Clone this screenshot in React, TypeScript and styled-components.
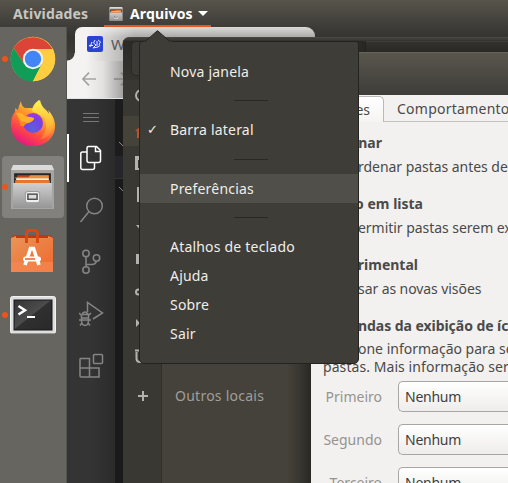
import React from 'react';
import styled, { createGlobalStyle } from 'styled-components';

const GlobalStyle = createGlobalStyle`
  * { box-sizing: border-box; }
  html, body { margin: 0; padding: 0; overflow: hidden; }
  body { font-family: 'Noto Sans', 'Open Sans', sans-serif; font-size: 14px; background: #33322e; }
  svg { display: block; flex: none; }
`;

const Desktop = styled.div`
  position: relative;
  width: 508px;
  height: 483px;
  overflow: hidden;
  display: flex;
  flex-direction: column;
`;

/* ---------- top bar ---------- */
const TopBar = styled.header`
  height: 27px;
  flex: none;
  display: flex;
  background: linear-gradient(#57544b, #3d3c38);
`;
const TopItem = styled.div<{ $active?: boolean; $width: number; $pad: number; $track: number }>`
  width: ${p => p.$width}px;
  padding-left: ${p => p.$pad}px;
  display: flex;
  align-items: center;
  font-weight: 700;
  font-size: 14px;
  letter-spacing: ${p => p.$track}px;
  white-space: nowrap;
  color: ${p => (p.$active ? '#ffffff' : '#c8c6c0')};
  border-bottom: 2px solid ${p => (p.$active ? '#e95420' : 'transparent')};
  padding-top: 2px;
`;
const AppName = styled.span`
  width: 63px;
  margin: 0 5px 0 7px;
`;

const Workspace = styled.div`
  flex: 1;
  display: flex;
  min-height: 0;
`;

/* ---------- dock ---------- */
const Dock = styled.nav`
  width: 67px;
  flex: none;
  display: flex;
  flex-direction: column;
  gap: 2px;
  padding: 1px 0 0 2px;
  background: #666560;
  border-right: 1px solid #54534e;
`;
const DockItem = styled.div<{ $focused?: boolean }>`
  width: 62px;
  height: 62px;
  border-radius: 4px;
  display: flex;
  align-items: center;
  background: ${p => (p.$focused ? '#82817d' : 'transparent')};
`;
const RunDot = styled.i<{ $on?: boolean }>`
  width: 6px;
  height: 6px;
  margin-right: 2px;
  border-radius: 50%;
  background: ${p => (p.$on ? '#e95420' : 'transparent')};
`;

/* ---------- browser ---------- */
const Browser = styled.section`
  flex: 1;
  display: flex;
  flex-direction: column;
  background: #33322e;
`;
const TabStrip = styled.div`
  height: 34px;
  padding-left: 8px;
  display: flex;
  background: linear-gradient(#3d3c38, #35342f 30%, #403f3b);
`;
const BrowserTab = styled.div`
  width: 240px;
  height: 34px;
  padding: 9px 0 0 12px;
  display: flex;
  align-items: flex-start;
  gap: 8px;
  border-radius: 7px 9px 0 0;
  color: #55555a;
  font-size: 15px;
  line-height: 16px;
  background:
    linear-gradient(90deg, #f4f3f2 12px, rgba(244, 243, 242, 0) 60px),
    linear-gradient(#dadad9, #a6a5a4 11px);
`;
const TabFoot = styled.div`
  width: 8px;
  height: 8px;
  margin: 26px 0 0 -8px;
  background: radial-gradient(circle at 0 0, #403f3b 7px, #f4f3f2 8px);
`;
const Toolbar = styled.div`
  height: 38px;
  padding: 11px 0 0 15px;
  display: flex;
  gap: 18px;
  border-bottom: 1px solid #dfe5e5;
  background: linear-gradient(90deg, #f4f3f2 18px, #e2e1e0 36px, #a3a2a1 56px);
`;
const Editor = styled.div`
  flex: 1;
  display: flex;
`;
const ActivityBar = styled.div`
  width: 48px;
  display: flex;
  flex-direction: column;
  gap: 4px;
  background: linear-gradient(90deg, #343434 24px, #2b2b2b);
`;
const MenuButton = styled.div`
  height: 31px;
  padding: 14px 0 0 16px;
`;
const Activity = styled.div<{ $active?: boolean }>`
  height: 48px;
  display: flex;
  align-items: center;
  padding-left: ${p => (p.$active ? 10 : 12)}px;
  border-left: ${p => (p.$active ? '2px solid #fff' : '0')};
`;
const EditorSide = styled.div`
  width: 8px;
  padding-top: 42px;
  background: linear-gradient(#1c1c1c 57px, #25252a 57px, #25252a 79px, #333 79px, #333 80px, #1a1a1a 80px);
`;

/* ---------- file manager window ---------- */
const FilesWindow = styled.section`
  position: absolute;
  left: 123px;
  top: 37px;
  width: 385px;
  height: 446px;
  display: flex;
  flex-direction: column;
  border-top-left-radius: 6px;
  overflow: hidden;
  background: #393833;
  border-top: 1px solid #4a4943;
`;
const FilesHeader = styled.div`
  height: 42px;
  display: flex;
  padding: 3px 0 4px 8px;
  background: linear-gradient(#3d3c37 2px, #2b2a27 3px, #35342f);
`;
const HeaderGroup = styled.div`
  width: 234px;
  border: 1px solid #292824;
  border-radius: 5px 0 0 5px;
  background: linear-gradient(90deg, #3b3a35 200px, #282723);
`;
const PathBar = styled.div`
  flex: 1;
  border-top: 1px solid #3f3e39;
  border-left: 1px solid #22211e;
  background: linear-gradient(#32312d, #2a2926 10px);
`;
const FilesBody = styled.div`
  flex: 1;
  display: flex;
`;
const Places = styled.div`
  width: 39px;
  display: flex;
  flex-direction: column;
  gap: 2px;
  border-right: 1px solid #302f2b;
`;
const Place = styled.div<{ $selected?: boolean; $last?: boolean }>`
  height: 30px;
  padding-left: 12px;
  margin-top: ${p => (p.$last ? 9 : 0)}px;
  display: flex;
  align-items: center;
  color: ${p => (p.$selected ? '#b4552f' : '#b4b2ae')};
  background: ${p => (p.$selected ? '#45423a' : 'transparent')};
`;
const SearchPlace = styled(Place)`
  height: 34px;
`;
const PlacesPane = styled.div`
  width: 149px;
  padding: 306px 0 0 13px;
  color: #a19e98;
  letter-spacing: 0.25px;
  line-height: 20px;
  background: linear-gradient(90deg, #45423b 125px, #393731 137px, #292823);
`;

/* ---------- preferences dialog ---------- */
const Dialog = styled.section`
  position: absolute;
  left: 311px;
  top: 52px;
  width: 197px;
  height: 431px;
  display: flex;
  flex-direction: column;
  overflow: hidden;
  color: #4a4a49;
  background: #f2f1f0;
`;
const DialogHeader = styled.div`
  height: 43px;
  flex: none;
  border-top: 1px solid #696458;
  background: linear-gradient(#59564d, #3e3d39);
`;
const Tabs = styled.div`
  height: 27px;
  flex: none;
  display: flex;
  border-bottom: 1px solid #c5c2bf;
`;
const DialogTab = styled.div<{ $active?: boolean }>`
  height: ${p => (p.$active ? 26 : 25)}px;
  margin-top: 1px;
  width: ${p => (p.$active ? 73 : 124)}px;
  padding-right: ${p => (p.$active ? 13 : 0)}px;
  padding-left: ${p => (p.$active ? 0 : 13)}px;
  display: flex;
  justify-content: ${p => (p.$active ? 'flex-end' : 'flex-start')};
  align-items: center;
  white-space: nowrap;
  border: solid #bbb8b5;
  border-width: ${p => (p.$active ? '1px 1px 0 0' : '0')};
  border-radius: 0 5px 0 0;
  letter-spacing: ${p => (p.$active ? 0 : 0.25)}px;
  background: ${p => (p.$active ? 'linear-gradient(#fff, #f5f4f3)' : 'transparent')};
`;
const Line = styled.div<{ $bold?: boolean; $gap?: number; $track?: number }>`
  height: 18px;
  flex: none;
  margin-top: ${p => p.$gap ?? 0}px;
  display: flex;
  line-height: 18px;
  white-space: nowrap;
  letter-spacing: ${p => p.$track ?? 0}px;
  font-weight: ${p => (p.$bold ? 700 : 400)};
`;
const Lead = styled.span<{ $to: number }>`
  width: ${p => p.$to}px;
  flex: none;
  display: flex;
  justify-content: flex-end;
  white-space: pre;
`;
const Form = styled.div`
  margin-top: 5px;
  display: flex;
  flex-direction: column;
  gap: 12px;
`;
const FormRow = styled.div`
  height: 31px;
  flex: none;
  display: flex;
  align-items: center;
`;
const FormLabel = styled.label`
  width: 71px;
  margin-right: 16px;
  text-align: right;
  color: #96938f;
`;
const Select = styled.div`
  flex: 1;
  height: 31px;
  padding: 0 0 1px 6px;
  display: flex;
  align-items: center;
  letter-spacing: -0.25px;
  border: solid #a9a6a2;
  border-width: 1px 0 1px 1px;
  border-radius: 5px 0 0 5px;
  color: #3f3f3e;
  background: linear-gradient(#fff, #eeedeb);
`;

/* ---------- application menu ---------- */
const Popover = styled.div`
  position: absolute;
  left: 139px;
  top: 30px;
  width: 220px;
`;
const PopArrow = styled.svg`
  margin-left: 5px;
  margin-bottom: -1px;
  position: relative;
  z-index: 1;
`;
const Menu = styled.div`
  height: 323px;
  padding-top: 15px;
  border: 1px solid #24231f;
  border-radius: 3px 3px 5px 5px;
  background: #3e3d38;
`;
const MenuItem = styled.div<{ $hover?: boolean }>`
  height: 29px;
  padding-left: 7px;
  display: flex;
  align-items: center;
  color: #f0eee9;
  letter-spacing: 0.2px;
  background: ${p => (p.$hover ? '#504f4a' : 'transparent')};
`;
const Check = styled.span`
  width: 23px;
  font-family: 'DejaVu Sans', sans-serif;
  font-size: 13px;
`;
const Separator = styled.div<{ $h: number }>`
  height: ${p => p.$h}px;
  display: flex;
  align-items: center;
  justify-content: center;
  padding-left: 4px;
  &::after { content: ''; width: 34px; height: 1px; background: #292824; }
`;

const Chrome = () => (
  <svg width="46" height="46" viewBox="-23 -23 46 46">
    <circle r="22.3" fill="#ffcd40" />
    <path d="M-19.3-11.2A22.3 22.3 0 0 1 19.3-10L0-10-8.7 5Z" fill="#db4437" />
    <path d="M-19.3-11.2A22.3 22.3 0 0 0 0 22.3L9 5-8.7 5Z" fill="#0f9d58" />
    <path d="M19.6-10A22.3 22.3 0 0 1 0 22.3L8.7 5 10-3 4-10Z" fill="#ffcd40" />
    <circle r="10.2" fill="#f1f1f1" /><circle r="8.2" fill="#4285f4" />
  </svg>
);

const Firefox = () => (
  <svg width="46" height="48" viewBox="0 0 46 48">
    <defs>
      <linearGradient id="ffBody" x1=".8" y1=".1" x2=".3" y2="1">
        <stop offset="0" stopColor="#fff44f" /><stop offset=".35" stopColor="#ff9a2b" /><stop offset=".7" stopColor="#ff4545" /><stop offset="1" stopColor="#e31587" />
      </linearGradient>
      <linearGradient id="ffTail" x1=".5" y1="0" x2=".5" y2="1">
        <stop offset="0" stopColor="#fff44f" /><stop offset=".6" stopColor="#ffbd3a" /><stop offset="1" stopColor="#ff7139" />
      </linearGradient>
      <radialGradient id="ffGlobe" cx=".5" cy=".8" r=".8">
        <stop offset="0" stopColor="#5b61df" /><stop offset=".6" stopColor="#7542e5" /><stop offset="1" stopColor="#a238d8" />
      </radialGradient>
    </defs>
    <path d="M11 2Q11 7 15 9L24 9Q28 2 30 1Q31 7 36 11Q38 13 39 15Q39 13 38 11Q44 17 45 25C46 38 36 47 23 47S0 38 1 23Q2 16 5 13L5 9 8 11 9 7Z" fill="url(#ffBody)" />
    <path d="M22 12Q22 6 29 1Q31 8 37 13Q44 20 43 29Q40 39 30 40Q37 34 36 25Q35 17 28 15Z" fill="url(#ffTail)" />
    <circle cx="23" cy="24" r="10" fill="url(#ffGlobe)" />
    <path d="M6 14Q11 12 15 17L24 19Q24 22 18 24Q15 25 14 27Q10 28 10 24Z" fill="#ff8a24" />
    <path d="M6 14Q11 12 15 17L24 19Q24 22 18 24L11 22Z" fill="#ffb02e" />
  </svg>
);

const Cabinet = ({ size }: { size: number }) => (
  <svg width={size} height={size} viewBox="0 0 44 44">
    <defs>
      <linearGradient id="cabFront" x1="0" y1="0" x2="0" y2="1"><stop offset="0" stopColor="#d0d0d0" /><stop offset="1" stopColor="#969696" /></linearGradient>
    </defs>
    <path d="M3 0H41L43 5V43H1V5Z" fill="#a5a5a3" /><path d="M3 0H41L43 5H1Z" fill="#dadada" />
    <path d="M4 8H40V18H4Z" fill="#272624" />
    <path d="M7 10H37V18H7Z" fill="#c4430e" /><path d="M5 12H18L20 10H38V13H5Z" fill="#f08b3d" />
    <path d="M6 13H38V15H6Z" fill="#fff1d8" /><path d="M5 15H39V18H5Z" fill="#e8762d" />
    <path d="M3 17.5H41V42H3Z" fill="url(#cabFront)" />
    <rect x="15" y="26" width="14" height="11" rx="2.5" fill="#eee" stroke="#9b9b9b" />
    <rect x="17.5" y="28.5" width="9" height="5" fill="#ddd" stroke="#4c4c4c" strokeWidth="1.4" />
  </svg>
);

const Software = () => (
  <svg width="44" height="46" viewBox="0 0 44 46">
    <defs><linearGradient id="bag" x1="0" y1="0" x2="1" y2="1"><stop offset="0" stopColor="#e99458" /><stop offset="1" stopColor="#f0672c" /></linearGradient></defs>
    <path d="M1 10L4 7H40L43 10Z" fill="#b83c0e" />
    <path d="M1 10L6 8V10ZM38 10V8L43 10Z" fill="#f08a50" />
    <path d="M1 10H43V44H1Z" fill="url(#bag)" /><path d="M1 34H43V44H1Z" fill="#f58953" opacity=".7" />
    <path d="M16.500 15V5Q17 2.500 19.500 2.500H24.500Q27 2.500 27.500 5V15" fill="none" stroke="#d9480f" strokeWidth="3" />
    <path d="M15 37L20.500 20.500H23.500L29 37" fill="none" stroke="#fff" strokeWidth="3.600" />
    <rect x="13" y="28.500" width="18" height="5" rx="2.500" fill="#fff" /><path d="M15 31H25" stroke="#e9622a" strokeWidth="1.500" />
  </svg>
);

const Terminal = () => (
  <svg width="46" height="39" viewBox="0 0 46 39">
    <defs><linearGradient id="term" x1="0" y1="0" x2="1" y2="1"><stop offset="0" stopColor="#343434" /><stop offset=".48" stopColor="#4c4c4c" /><stop offset=".5" stopColor="#303030" /><stop offset="1" stopColor="#292929" /></linearGradient></defs>
    <rect x=".5" y=".5" width="45" height="37" rx="2" fill="#dedede" stroke="#f2f2f2" /><path d="M1 37.500H45" stroke="#999" />
    <rect x="4" y="4" width="38" height="30" fill="url(#term)" stroke="#171717" />
    <path d="M8.500 10L15 14.200 8.500 18.500" fill="none" stroke="#fff" strokeWidth="2.500" /><path d="M17 21H25" stroke="#fff" strokeWidth="2" />
  </svg>
);

const Stroke = ({ children, active }: { children: React.ReactNode; active?: boolean }) => (
  <svg width="25" height="26" viewBox="0 0 25 26" fill="none" stroke={active ? '#fff' : '#858585'} strokeWidth="1.5">{children}</svg>
);

const placeIcons: React.ReactNode[] = [
  <path d="M8 1L0 8H2V15H6V10H10V15H14V8H16Z" fill="currentColor" />,
  <path d="M0 1H16V15H0ZM3 5V13H13V5Z" fill="currentColor" fillRule="evenodd" />,
  <path d="M2 0H11L15 4V15H2Z" fill="currentColor" />,
  <path d="M1 6H5V0H11V6H15L8 14Z" fill="currentColor" />,
  <path d="M1 3H15V13H1Z" fill="currentColor" />,
  <g fill="none" stroke="currentColor" strokeWidth="2"><circle cx="3.500" cy="9" r="2.500" /><path d="M6 9H10V2L15 4" /></g>,
  <path d="M1 4L5 8 1 12ZM6 3H15V13H6Z" fill="currentColor" />,
  <path d="M0 3.500H16M5 3V1H11V3M1.500 5V12Q2 15 5 15H11Q14 15 14.500 12V5" fill="none" stroke="currentColor" strokeWidth="2" />,
  <path d="M3 8H13M8 3V13" fill="none" stroke="currentColor" strokeWidth="2" />,
];

export default function App() {
  return (
    <Desktop>
      <GlobalStyle />
      <TopBar>
        <TopItem $width={104} $pad={13} $track={0.15}>Atividades</TopItem>
        <TopItem $active $width={107} $pad={5} $track={0.15}>
          <Cabinet size={14} />
          <AppName>Arquivos</AppName>
          <svg width="10" height="6" viewBox="0 0 10 6"><path d="M0 0H10L5 5Z" fill="#fff" /></svg>
        </TopItem>
      </TopBar>
      <Workspace>
        <Dock>
          <DockItem><RunDot $on /><Chrome /></DockItem>
          <DockItem><RunDot /><Firefox /></DockItem>
          <DockItem $focused><RunDot $on /><Cabinet size={45} /></DockItem>
          <DockItem><RunDot /><Software /></DockItem>
          <DockItem><RunDot $on /><Terminal /></DockItem>
        </Dock>
        <Browser>
          <TabStrip>
            <TabFoot />
            <BrowserTab>
              <svg width="16" height="16" viewBox="0 0 16 16" fill="none" stroke="#e6e8ff"><rect width="16" height="16" rx="2" fill="#2b43d3" stroke="none" /><path d="M2 9.500H6M5 6L3 11M8 4L6.500 7 9 9 6 12 11 11M10 5V10M11 4Q15 6 12 8Q14 10 11 11" /></svg>
              W
            </BrowserTab>
          </TabStrip>
          <Toolbar>
            <svg width="14" height="14" viewBox="0 0 14 14" fill="none" stroke="#a4a3a2" strokeWidth="1.700"><path d="M14 7H1M7 .7L.9 7 7 13.300" /></svg>
            <svg width="14" height="14" viewBox="0 0 14 14" fill="none" stroke="#858482" strokeWidth="1.700"><path d="M0 7H13M7 .7L13.100 7 7 13.300" /></svg>
          </Toolbar>
          <Editor>
            <ActivityBar>
              <MenuButton><svg width="16" height="10" viewBox="0 0 16 10" stroke="#777"><path d="M0 .5H16M0 4.500H16M0 8.500H16" /></svg></MenuButton>
              <Activity $active><Stroke active><path d="M9.500 1.500H17.500L21.500 5.500V15.500Q21.500 17.500 19.500 17.500H10Q8 17.500 8 15.500V3Q8 1.500 9.500 1.500ZM16.500 1.500V6.500H21.500M8 7H3.500Q1.800 7 1.800 8.500V22.500Q1.800 24.500 3.500 24.500H13.500Q15.500 24.500 15.500 22.500V18" /></Stroke></Activity>
              <Activity><Stroke><circle cx="15.500" cy="9" r="7.800" /><path d="M10 14.500L1.500 25" /></Stroke></Activity>
              <Activity><Stroke><circle cx="7" cy="4.500" r="3.200" /><circle cx="7" cy="21" r="3.200" /><circle cx="17.500" cy="9" r="3.200" /><path d="M7 8V17.500M17.500 12.500Q16 16 12 15.500H7" /></Stroke></Activity>
              <Activity><Stroke><path d="M8.500 11V1.500L23.500 12 14 18M3 13.500H9.500V20Q9 24.500 6 24.500T2.500 20V13.500M2.500 17H10M0 12L3 15M12 12L9 15M0 19H12M1 24.500L3 22M11 24.500L9 22M3 13Q6 9 9 13" /></Stroke></Activity>
              <Activity><Stroke><path d="M1.500 5.500H10.500V15H20V24H2Q1 24 1 23V6ZM1 15H10.500V24" /><rect x="14.500" y="1.500" width="9" height="9" rx="1" /></Stroke></Activity>
            </ActivityBar>
            <EditorSide>
              <svg width="8" height="54" viewBox="0 0 8 54" fill="none" stroke="#888"><path d="M4 1L8 5M4 46L8 50" /></svg>
            </EditorSide>
          </Editor>
        </Browser>
      </Workspace>

      <FilesWindow>
        <FilesHeader><HeaderGroup /><PathBar /></FilesHeader>
        <FilesBody>
          <Places>
            <SearchPlace><svg width="16" height="16" viewBox="0 0 16 16" fill="none" stroke="currentColor" strokeWidth="2"><circle cx="6.500" cy="6.500" r="5.500" /><path d="M11 11L16 16" /></svg></SearchPlace>
            {placeIcons.map((icon, i) => (
              <Place key={i} $selected={i === 0} $last={i === placeIcons.length - 1}>
                <svg width="16" height="16" viewBox="0 0 16 16">{icon}</svg>
              </Place>
            ))}
          </Places>
          <PlacesPane>Outros locais</PlacesPane>
        </FilesBody>
      </FilesWindow>

      <Dialog>
        <DialogHeader />
        <Tabs>
          <DialogTab $active>Visualizações</DialogTab>
          <DialogTab>Comportamento</DialogTab>
        </Tabs>
        <Line $bold $gap={12}><Lead $to={71}>Ordenar</Lead></Line>
        <Line $gap={6} $track={-0.04}><Lead $to={47}>O</Lead>rdenar pastas antes de arquivos</Line>
        <Line $bold $gap={19}><Lead $to={112}>Visão em lista</Lead></Line>
        <Line $gap={6} $track={-0.04}><Lead $to={47}>P</Lead>ermitir pastas serem expandidas</Line>
        <Line $bold $gap={19}><Lead $to={107}>Experimental</Lead></Line>
        <Line $gap={6} $track={-0.08}><Lead $to={47}>U</Lead>sar as novas visões</Line>
        <Line $bold $gap={19} $track={-0.05}><Lead $to={47}>Lege</Lead>ndas da exibição de ícones</Line>
        <Line $gap={5}><Lead $to={47}>Seleci</Lead>one informação para ser</Line>
        <Line $track={0.07}><Lead $to={12} />pastas. Mais informação será</Line>
        <Form>
          {['Primeiro', 'Segundo', 'Terceiro'].map(label => (
            <FormRow key={label}><FormLabel>{label}</FormLabel><Select>Nenhum</Select></FormRow>
          ))}
        </Form>
      </Dialog>

      <Popover>
        <PopArrow width="28" height="12" viewBox="0 0 28 12"><path d="M0 11.500L2 11 13.500 .7 25 11 28 11.500V12H0Z" fill="#3e3d38" /><path d="M1 11.500L13.500 .7 26 11.500" fill="none" stroke="#24231f" /></PopArrow>
        <Menu>
          <MenuItem><Check />Nova janela</MenuItem>
          <Separator $h={29} />
          <MenuItem><Check>✓</Check>Barra lateral</MenuItem>
          <Separator $h={30} />
          <MenuItem $hover><Check />Preferências</MenuItem>
          <Separator $h={29} />
          <MenuItem><Check />Atalhos de teclado</MenuItem>
          <MenuItem><Check />Ajuda</MenuItem>
          <MenuItem><Check />Sobre</MenuItem>
          <MenuItem><Check />Sair</MenuItem>
        </Menu>
      </Popover>
    </Desktop>
  );
}
